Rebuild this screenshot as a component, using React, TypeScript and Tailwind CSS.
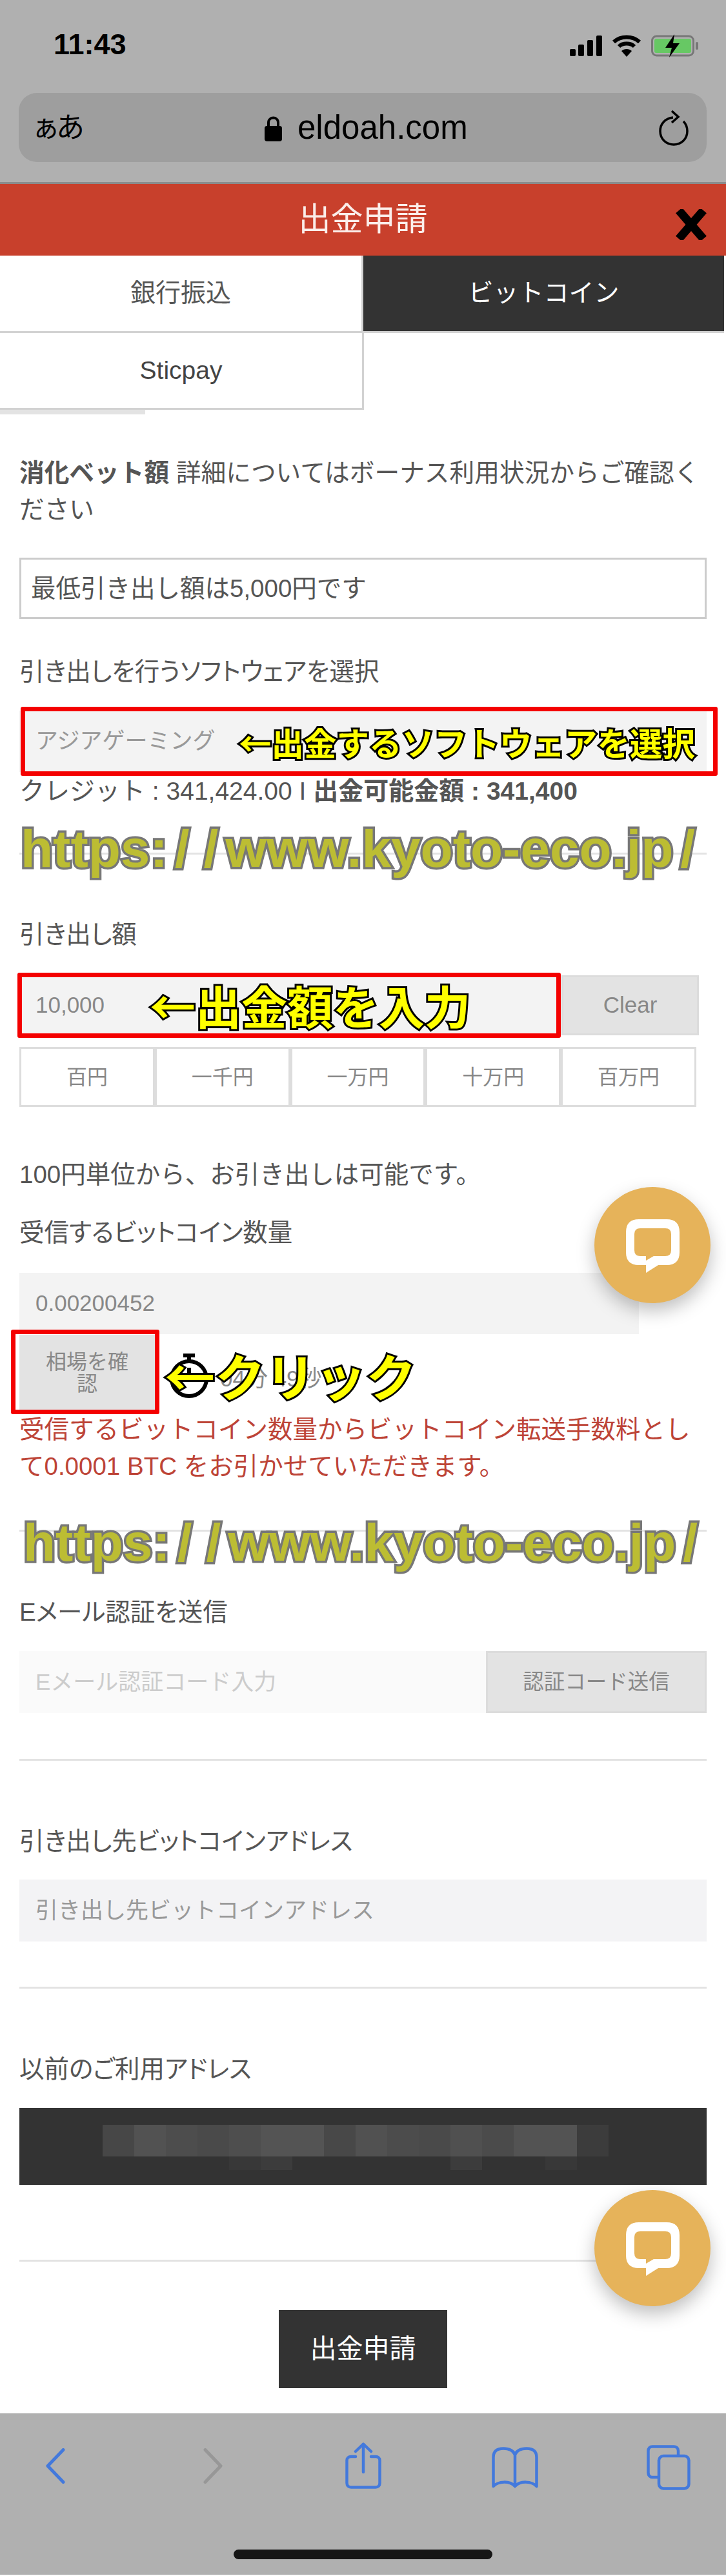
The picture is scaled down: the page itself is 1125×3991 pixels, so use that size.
const mosaic = ["#474747","#525252","#4d4d4d","#4a4a4a","#4e4e4e","#545454","#545454","#484848","#515151","#4c4c4c","#4a4a4a","#505050","#4b4b4b","#535353","#535353","#3c3c3c"]
const mosaicLow = ["","","","","#383838","#3c3c3c","","","","","","#3c3c3c","","","#383838",""]

const Label = ({ children }: { children: React.ReactNode }) => (
  <p className="h-[57px] text-[38.5px] leading-[61px] text-[#555] [font-feature-settings:'palt']">{children}</p>
)

const Divider = ({ children }: { children?: React.ReactNode }) => (
  <div className="relative h-[3px] bg-[#e3e3e3]">{children}</div>
)

const Slash = () => <span className="mx-[11px]">/</span>

const Watermark = ({ className }: { className: string }) => (
  <span
    className={`absolute whitespace-nowrap text-[82px] leading-none font-bold text-[#bcbd33] [-webkit-text-stroke:7px_#777] [paint-order:stroke_fill] ${className}`}
  >
    https:
    <Slash />
    <Slash />
    www.kyoto-eco.jp
    <Slash />
  </span>
)

const Note = ({ children, className }: { children: React.ReactNode; className: string }) => (
  <span
    className={`absolute whitespace-nowrap leading-none font-bold text-[#ffff00] [-webkit-text-stroke:6px_#000] [paint-order:stroke_fill] [font-family:'Noto_Sans_CJK_JP',sans-serif] ${className}`}
  >
    {children}
  </span>
)

const ChatBubble = ({ className }: { className: string }) => (
  <div className={`absolute left-[921px] flex h-[180px] w-[180px] items-center justify-center rounded-full bg-[#e6b35a] shadow-[0_12px_28px_rgba(0,0,0,0.25)] ${className}`}>
    <svg width="83" height="83" viewBox="0 0 83 83" className="mt-[2px]">
      <path
        fill="#fff"
        fillRule="evenodd"
        d="M20 0H63Q83 0 83 20V51Q83 71 63 71H50L31 83V71H20Q0 71 0 51V20Q0 0 20 0ZM22 14Q13 14 13 23V48Q13 57 22 57H31V64L43 57H61Q70 57 70 48V23Q70 14 61 14Z"
      />
    </svg>
  </div>
)

const App = () => {
  return (
    <div className="relative h-[3991px] w-[1125px] overflow-hidden bg-white [font-family:'Liberation_Sans','Noto_Sans_CJK_JP',sans-serif]">
      <header className="h-[285px] border-b-[3px] border-[#8c8c8c] bg-[#b0b0b0]">
        <div className="flex h-[144px] items-start justify-between pl-[83px] pr-[42px] pt-[45px]">
          <span className="text-[45px] leading-[48px] font-semibold text-black">11:43</span>
          <div className="mt-[8px] flex items-center gap-[15px]">
            <svg width="50" height="32" viewBox="0 0 50 32">
              <rect x="0" y="21" width="9" height="11" rx="2" />
              <rect x="13" y="14" width="9" height="18" rx="2" />
              <rect x="27" y="7" width="9" height="25" rx="2" />
              <rect x="41" y="0" width="9" height="32" rx="2" />
            </svg>
            <svg width="46" height="34" viewBox="0 0 46 34" fill="none" stroke="#000" strokeWidth="6">
              <path d="M3 11C14 1 32 1 43 11" />
              <path d="M11 18C17 12 29 12 35 18" />
              <path d="M23 34L15 25C19 21 27 21 31 25Z" fill="#000" stroke="none" />
            </svg>
            <svg width="74" height="36" viewBox="0 0 74 36">
              <rect x="1.5" y="3" width="64" height="30" rx="7" fill="none" stroke="#777" strokeWidth="3" />
              <rect x="5" y="7" width="57" height="22" rx="3" fill="#67c864" />
              <rect x="69" y="12" width="4" height="12" rx="2" fill="#777" />
              <path d="M36 0L22 21H32L28 36L44 14H34Z" fill="#000" />
            </svg>
          </div>
        </div>
        <div className="mx-[29px] flex h-[107px] w-[1066px] items-center rounded-[28px] bg-[#9e9e9e] pl-[20px] pr-[28px]">
          <span className="w-[361px] text-[44px] leading-none tracking-[-6px] text-black">ぁあ</span>
          <svg width="27" height="40" viewBox="0 0 27 40" className="mt-[2px]">
            <path d="M6 17V11C6 1 21 1 21 11V17" fill="none" stroke="#000" strokeWidth="4" />
            <rect x="0" y="16" width="27" height="24" rx="4" />
          </svg>
          <span className="ml-[24px] text-[51px] leading-none text-black">eldoah.com</span>
          <svg width="46" height="56" viewBox="0 0 46 56" fill="none" stroke="#000" strokeWidth="3.5" className="ml-auto">
            <path d="M22 12C10 13 2 22 2 33C2 45 11 54 23 54C35 54 44 45 44 33C44 27 42 22 38 18" />
            <path d="M20 2L30 11L20 20" />
          </svg>
        </div>
      </header>

      <div className="relative flex h-[111px] items-center justify-center bg-[#c8402c]">
        <h1 className="text-[50px] font-normal text-[#fbeeea]">出金申請</h1>
        <svg width="48" height="48" viewBox="0 0 48 48" className="absolute left-[1047px] top-[39px]" stroke="#000" strokeWidth="13">
          <path d="M5 2L43 46M43 2L5 46" />
        </svg>
      </div>

      <div className="grid h-[120px] w-[1122px] grid-cols-[563px_559px] text-[39px]">
        <div className="flex items-center justify-center border-r-[3px] border-b-[3px] border-[#d2d2d2] text-[#555]">銀行振込</div>
        <div className="flex items-center justify-center border-b-[3px] border-[#d2d2d2] bg-[#333] text-white">
          ビットコイン
        </div>
      </div>
      <div className="flex h-[119px] w-[564px] items-center justify-center border-r-[3px] border-b-[3px] border-[#d2d2d2] text-[39px] text-[#444]">
        Sticpay
      </div>
      <div className="h-[7px] w-[225px] bg-[#e3e3e3]" />

      <main className="px-[30px]">
        <p className="mt-[62px] text-[38.7px] leading-[57px] text-[#555]">
          <strong className="font-bold">消化ベット額</strong> 詳細についてはボーナス利用状況からご確認ください
        </p>

        <div className="mt-[46px] flex h-[95px] items-center border-[3px] border-[#ccc] pl-[15px] text-[38.5px] text-[#555]">
          最低引き出し額は5,000円です
        </div>

        <div className="mt-[51px]">
          <Label>引き出しを行うソフトウェアを選択</Label>
        </div>

        <div className="relative mt-[34px] flex h-[95px] items-center bg-[#f3f3f3] pl-[25px] text-[35px] text-[#999]">
          アジアゲーミング
          <div className="absolute left-[2px] -top-[6px] h-[107px] w-[1080px] rounded-[3px] border-[7px] border-[#f40000]" />
          <Note className="left-[340px] top-[23px] text-[50.5px]">←出金するソフトウェアを選択</Note>
        </div>

        <p className="h-[57px] text-[39px] leading-[59px] text-[#555]">
          クレジット : 341,424.00 I <strong className="font-bold">出金可能金額 : 341,400</strong>
        </p>

        <div className="mt-[68px]">
          <Divider>
            <Watermark className="left-[2px] -top-[47px]" />
          </Divider>
        </div>

        <div className="mt-[93px]">
          <Label>引き出し額</Label>
        </div>

        <div className="mt-[37px] flex h-[93px] w-[1053px]">
          <div className="relative flex w-[840px] items-center bg-[#f3f3f3] pl-[25px] text-[35px] text-[#888]">
            10,000
            <div className="absolute -left-[3px] -top-[4px] h-[101px] w-[842px] rounded-[3px] border-[7px] border-[#f40000]" />
            <Note className="left-[202px] top-[10px] text-[71px]">←出金額を入力</Note>
          </div>
          <div className="flex flex-1 items-center justify-center border-[3px] border-[#dcdcdc] bg-[#e3e3e3] text-[35px] text-[#888]">
            Clear
          </div>
        </div>

        <div className="mt-[18px] grid h-[93px] w-[1049px] grid-cols-5 text-[32px] text-[#888]">
          {["百円", "一千円", "一万円", "十万円", "百万円"].map((v) => (
            <div key={v} className="flex items-center justify-center border-[3px] border-[#ddd]">
              {v}
            </div>
          ))}
        </div>

        <p className="mt-[74px] h-[57px] text-[38.5px] leading-[61px] text-[#555]">100円単位から、お引き出しは可能です。</p>
        <div className="mt-[33px]">
          <Label>受信するビットコイン数量</Label>
        </div>

        <div className="mt-[36px] flex h-[95px] w-[960px] items-center bg-[#f3f3f3] pl-[25px] text-[35px] text-[#888]">
          0.00200452
        </div>

        <div className="relative flex h-[119px] items-center">
          <div className="flex h-[118px] w-[210px] items-center justify-center bg-[#e3e3e3] px-[32px] text-center text-[32px] leading-[34px] text-[#888]">
            相場を確認
          </div>
          <div className="absolute -left-[13px] -top-[7px] h-[131px] w-[230px] rounded-[3px] border-[7px] border-[#f40000]" />
          <svg width="62" height="70" viewBox="0 0 62 70" fill="none" stroke="#000" strokeWidth="6" className="ml-[22px] mt-[10px]">
            <circle cx="31" cy="39" r="27" />
            <path d="M31 2V12M22 3H40M31 39V22" />
          </svg>
          <span className="ml-[17px] mt-[20px] text-[35px] text-[#888]">04分 49秒</span>
          <Note className="left-[225px] top-[24px] text-[78px]">←クリック</Note>
        </div>

        <p className="text-[38.5px] leading-[57px] text-[#bd4437]">
          受信するビットコイン数量からビットコイン転送手数料として0.0001 BTC をお引かせていただきます。
        </p>

        <div className="mt-[70px]">
          <Divider>
            <Watermark className="left-[6px] -top-[21px]" />
          </Divider>
        </div>

        <div className="mt-[94px]">
          <Label>Eメール認証を送信</Label>
        </div>

        <div className="mt-[34px] flex h-[96px]">
          <div className="flex flex-1 items-center bg-[#fafafa] pl-[25px] text-[35px] text-[#ccc]">
            Eメール認証コード入力
          </div>
          <div className="flex w-[342px] items-center justify-center border-[3px] border-[#dcdcdc] bg-[#e3e3e3] text-[32.5px] text-[#888]">
            認証コード送信
          </div>
        </div>

        <div className="mt-[71px]">
          <Divider />
        </div>

        <div className="mt-[94px]">
          <Label>引き出し先ビットコインアドレス</Label>
        </div>

        <div className="mt-[33px] flex h-[96px] items-center bg-[#f3f3f5] pl-[25px] text-[35px] text-[#999]">
          引き出し先ビットコインアドレス
        </div>

        <div className="mt-[70px]">
          <Divider />
        </div>

        <div className="mt-[94px]">
          <Label>以前のご利用アドレス</Label>
        </div>

        <div className="mt-[34px] h-[119px] bg-[#333] pl-[129px] pt-[26px]">
          <div className="flex h-[49px]">
            {mosaic.map((c, i) => (
              <span key={i} className="h-full w-[49px] shrink-0" style={{ backgroundColor: c }} />
            ))}
          </div>
          <div className="flex h-[21px]">
            {mosaicLow.map((c, i) => (
              <span key={i} className="h-full w-[49px] shrink-0" style={{ backgroundColor: c || "transparent" }} />
            ))}
          </div>
        </div>

        <div className="mt-[116px]">
          <Divider />
        </div>

        <div className="mt-[75px] flex justify-center">
          <button className="h-[121px] w-[261px] bg-[#333] text-[41px] text-white">出金申請</button>
        </div>
      </main>

      <footer className="relative mt-[39px] h-[250px] bg-[#b0b0b0]">
        <div className="flex items-start pt-[45px]">
          <svg width="30" height="55" viewBox="0 0 30 55" fill="none" stroke="#4379dc" strokeWidth="5" strokeLinecap="round" strokeLinejoin="round" className="ml-[71px] mt-[9px]">
            <path d="M27 2.5L3 27.5L27 52.5" />
          </svg>
          <svg width="30" height="55" viewBox="0 0 30 55" fill="none" stroke="#979797" strokeWidth="5" strokeLinecap="round" strokeLinejoin="round" className="ml-[214px] mt-[9px]">
            <path d="M3 2.5L27 27.5L3 52.5" />
          </svg>
          <svg width="56" height="72" viewBox="0 0 56 72" fill="none" stroke="#4379dc" strokeWidth="4.5" strokeLinecap="round" strokeLinejoin="round" className="ml-[190px]">
            <path d="M16 22H9C5 22 2.5 24.5 2.5 28V63C2.5 67 5 69.5 9 69.5H47C51 69.5 53.5 67 53.5 63V28C53.5 24.5 51 22 47 22H40" />
            <path d="M28 46V3M16 14L28 2.5L40 14" />
          </svg>
          <svg width="72" height="64" viewBox="0 0 72 64" fill="none" stroke="#4379dc" strokeWidth="4.5" strokeLinecap="round" strokeLinejoin="round" className="ml-[171px] mt-[7px]">
            <path d="M36 12C33 5 26 2.5 18 2.5C8 2.5 2.5 7 2.5 16V61C10 53 28 52 36 61C44 52 62 53 69.5 61V16C69.5 7 64 2.5 54 2.5C46 2.5 39 5 36 12ZM36 12V61" />
          </svg>
          <svg width="68" height="70" viewBox="0 0 68 70" fill="none" stroke="#4379dc" strokeWidth="4.5" strokeLinejoin="round" className="ml-[168px] mt-[4px]">
            <path d="M49 17V9C49 5 46 2.5 42 2.5H9C5 2.5 2.5 5 2.5 9V43C2.5 47 5 50 9 50H19" />
            <rect x="19" y="17" width="46.5" height="50.5" rx="7" />
          </svg>
        </div>
        <div className="absolute left-[362px] top-[211px] h-[15px] w-[401px] rounded-full bg-[#161616]" />
      </footer>

      <ChatBubble className="top-[1839px]" />
      <ChatBubble className="top-[3393px]" />
    </div>
  )
}

export default App
